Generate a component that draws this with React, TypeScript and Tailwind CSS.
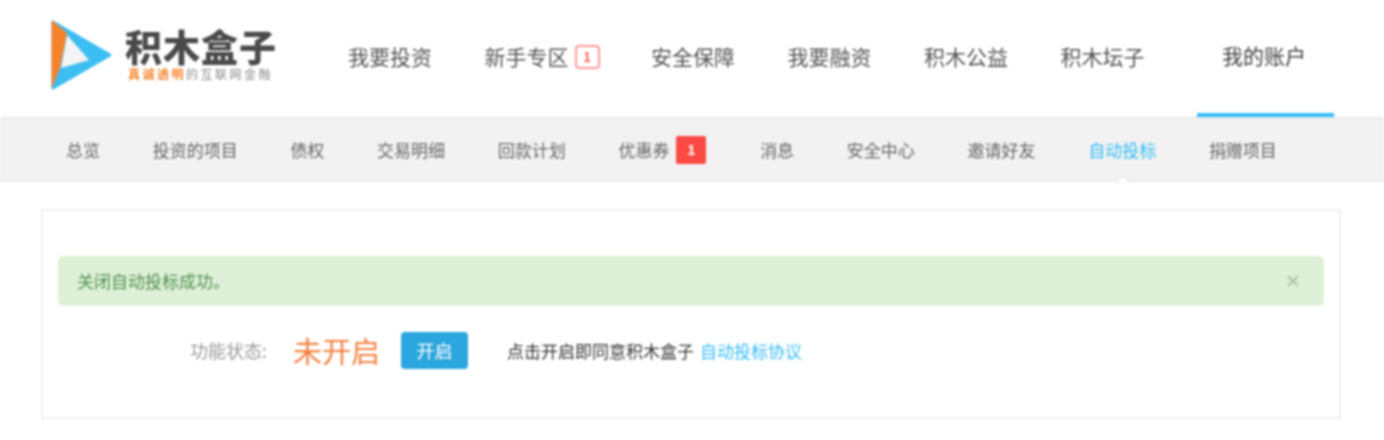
import React from "react";

const mainNav = ["我要投资", "新手专区", "安全保障", "我要融资", "积木公益", "积木坛子"];
const subNav = ["总览", "投资的项目", "债权", "交易明细", "回款计划", "优惠券", "消息", "安全中心", "邀请好友", "自动投标", "捐赠项目"];

function Logo() {
  return (
    <div className="flex items-start w-[298px] shrink-0 pt-[19px]">
      <svg width="62" height="72" viewBox="0 0 62 72" className="shrink-0">
        <path d="M3 3 L60 36 L3 69 Z" fill="#3dbef2" stroke="#3dbef2" strokeWidth="3" strokeLinejoin="round" />
        <path d="M1.5 1 L17 14 L10 49 L1.5 70 Z" fill="#f6832b" />
        <path d="M17 16 L39 41 L11 49 Z" fill="#f4f4f4" />
      </svg>
      <div className="ml-[13px] mt-[6px] flex flex-col">
        <div className="text-[37px] leading-[42px] font-black text-[#4a4a4a] tracking-[1px] whitespace-nowrap">积木盒子</div>
        <div className="ml-[3px] text-[12px] leading-[14px] tracking-[2.5px] text-[#8a8a8a] whitespace-nowrap">
          <span className="text-[#f6832b] font-bold">真诚透明</span>的互联网金融
        </div>
      </div>
    </div>
  );
}

export default function App() {
  return (
    <div className="w-[1384px] h-[440px] overflow-hidden bg-white blur-[0.8px]" style={{ fontFamily: '"Noto Sans CJK SC", "Noto Sans", sans-serif' }}>
      <header className="h-[117px] flex pl-[50px]">
        <Logo />
        <nav className="flex items-center gap-[52.5px] text-[21px] text-[#555] pb-[3px]">
          {mainNav.map((n) => (
            <div key={n} className="flex items-center whitespace-nowrap">
              {n}
              {n === "新手专区" && (
                <span className="ml-[6px] -mr-[1px] w-[25px] h-[24px] border-2 border-[#fb9a96] rounded-[4px] text-[#f9605b] text-[13px] font-bold flex items-center justify-center">1</span>
              )}
            </div>
          ))}
        </nav>
        <div className="ml-[52.5px] w-[137px] h-full flex items-center justify-start pl-[25px] text-[21px] text-[#444] border-b-4 border-[#35bdf5] pb-[1px] whitespace-nowrap">
          我的账户
        </div>
      </header>
      <div className="relative h-[65px] bg-[#f2f2f2] border-y-2 border-[#ebebeb] flex items-center gap-[52.7px] pl-[66px] text-[17px] text-[#666]">
        {subNav.map((n) => (
          <div key={n} className={`flex items-center whitespace-nowrap ${n === "自动投标" ? "text-[#35bdf5]" : ""}`}>
            {n}
            {n === "优惠券" && (
              <span className="ml-[7px] mr-[1px] w-[30px] h-[28px] bg-[#fb4a44] rounded-[2px] text-white text-[14px] font-bold flex items-center justify-center">1</span>
            )}
          </div>
        ))}
        <div className="absolute left-[1116.5px] -bottom-[8px] w-[12px] h-[12px] rotate-45 bg-white border-l-2 border-t-2 border-[#ebebeb]" />
      </div>
      <main className="ml-[41px] mt-[27px] w-[1300px] h-[210px] border-2 border-[#efefef] pt-[45px] px-[15px]">
        <div className="h-[50px] bg-[#dff0d8] rounded-[5px] flex items-center justify-between pl-[19px] pr-[25px] text-[17px] text-[#4f8f4f]">
          <span>关闭自动投标成功。</span>
          <svg width="12" height="12" viewBox="0 0 12 12" stroke="#afc1ab" strokeWidth="1.8">
            <path d="M1 1 L11 11 M11 1 L1 11" />
          </svg>
        </div>
        <div className="flex items-center mt-[26px] pl-[132px] h-[37px]">
          <span className="w-[103px] text-[18px] text-[#999] whitespace-nowrap">功能状态:</span>
          <span className="w-[108px] text-[29px] text-[#f5803e] whitespace-nowrap">未开启</span>
          <button className="w-[67px] h-[37px] bg-[#2ba6de] rounded-[4px] text-white text-[18px]">开启</button>
          <span className="ml-[39px] text-[17px] text-[#333] whitespace-nowrap">点击开启即同意积木盒子</span>
          <span className="ml-[6px] text-[17px] text-[#35bdf5] whitespace-nowrap">自动投标协议</span>
        </div>
      </main>
    </div>
  );
}
